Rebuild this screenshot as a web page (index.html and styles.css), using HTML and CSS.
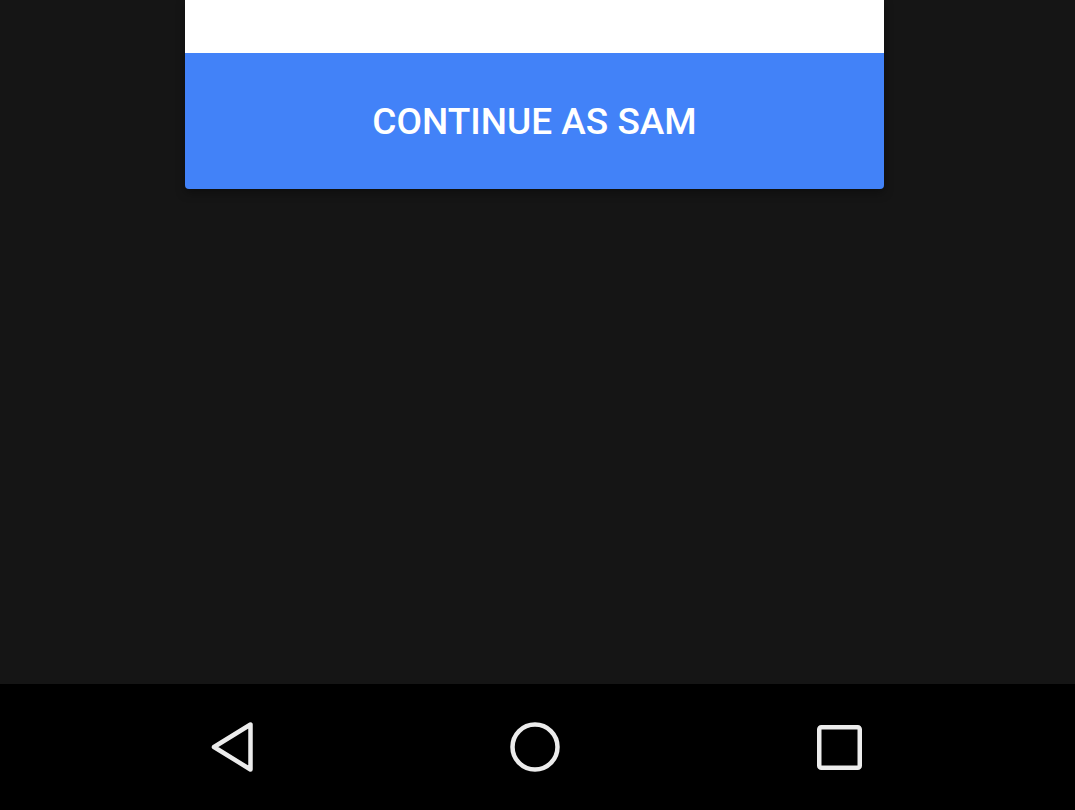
FILE: index.html
```html
<!DOCTYPE html>
<html>
<head>
<meta charset="utf-8">
<link rel="stylesheet" href="styles.css">
</head>
<body>
<div class="screen">
  <main class="content">
    <div class="card">
      <div class="card-top"></div>
      <button class="continue">CONTINUE AS SAM</button>
    </div>
  </main>
  <nav class="navbar">
    <svg class="nav-icon" width="42" height="50" viewBox="0 0 42 50">
      <path d="M39.5 2.5 L39.5 47.5 L3 25 Z" fill="none" stroke="#ececec" stroke-width="4.5" stroke-linejoin="round"/>
    </svg>
    <svg class="nav-icon" width="50" height="50" viewBox="0 0 50 50">
      <circle cx="25" cy="25" r="22.5" fill="none" stroke="#ececec" stroke-width="4.5"/>
    </svg>
    <svg class="nav-icon" width="45" height="45" viewBox="0 0 45 45">
      <rect x="2.25" y="2.25" width="40.5" height="40.5" rx="2" fill="none" stroke="#ececec" stroke-width="4.5"/>
    </svg>
  </nav>
</div>
</body>
</html>
```
FILE: styles.css
```css
html, body {
  margin: 0;
  padding: 0;
  width: 1075px;
  height: 810px;
  overflow: hidden;
  background: #151515;
  font-family: Roboto, "Liberation Sans", sans-serif;
}
.screen {
  display: flex;
  flex-direction: column;
  height: 810px;
}
.content {
  flex: 1;
  display: flex;
  justify-content: center;
  align-items: flex-start;
}
.card {
  width: 699px;
  margin-right: 6px;
  border-radius: 0 0 4px 4px;
  overflow: hidden;
  box-shadow: 0 4px 10px rgba(0,0,0,0.35);
}
.card-top {
  height: 53px;
  background: #ffffff;
}
.continue {
  display: block;
  width: 100%;
  height: 136px;
  border: none;
  background: #4282f8;
  color: #ffffff;
  font-family: Roboto, "Liberation Sans", sans-serif;
  font-weight: 500;
  font-size: 37px;
  padding: 0;
  letter-spacing: 0;
}
.navbar {
  height: 126px;
  background: #000000;
  display: flex;
  align-items: center;
  justify-content: space-between;
  padding: 0 213px 0 211px;
}
.nav-icon {
  display: block;
}
```
